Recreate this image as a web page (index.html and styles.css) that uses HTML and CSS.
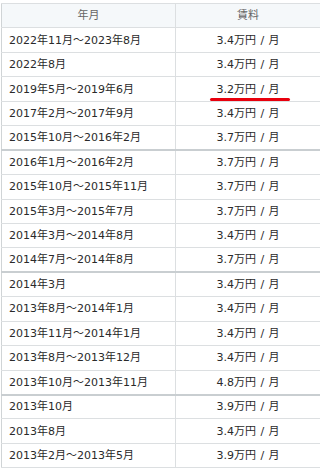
FILE: index.html
```html
<!DOCTYPE html>
<html lang="ja">
<head>
<meta charset="utf-8">
<link rel="stylesheet" href="styles.css">
</head>
<body>
<table class="rent">
  <thead>
    <tr><th class="c-date">年月</th><th class="c-rent">賃料</th></tr>
  </thead>
  <tbody>
    <tr><td>2022年11月～2023年8月</td><td class="r">3.4万円 / 月</td></tr>
    <tr><td>2022年8月</td><td class="r">3.4万円 / 月</td></tr>
    <tr><td>2019年5月～2019年6月</td><td class="r"><span class="mark">3.2万円 / 月</span></td></tr>
    <tr><td>2017年2月～2017年9月</td><td class="r">3.4万円 / 月</td></tr>
    <tr class="sep"><td>2015年10月～2016年2月</td><td class="r">3.7万円 / 月</td></tr>
    <tr><td>2016年1月～2016年2月</td><td class="r">3.7万円 / 月</td></tr>
    <tr><td>2015年10月～2015年11月</td><td class="r">3.7万円 / 月</td></tr>
    <tr><td>2015年3月～2015年7月</td><td class="r">3.7万円 / 月</td></tr>
    <tr><td>2014年3月～2014年8月</td><td class="r">3.4万円 / 月</td></tr>
    <tr class="sep"><td>2014年7月～2014年8月</td><td class="r">3.7万円 / 月</td></tr>
    <tr><td>2014年3月</td><td class="r">3.4万円 / 月</td></tr>
    <tr><td>2013年8月～2014年1月</td><td class="r">3.4万円 / 月</td></tr>
    <tr><td>2013年11月～2014年1月</td><td class="r">3.4万円 / 月</td></tr>
    <tr><td>2013年8月～2013年12月</td><td class="r">3.4万円 / 月</td></tr>
    <tr class="sep"><td>2013年10月～2013年11月</td><td class="r">4.8万円 / 月</td></tr>
    <tr><td>2013年10月</td><td class="r">3.9万円 / 月</td></tr>
    <tr><td>2013年8月</td><td class="r">3.4万円 / 月</td></tr>
    <tr><td>2013年2月～2013年5月</td><td class="r">3.9万円 / 月</td></tr>
  </tbody>
</table>
</body>
</html>
```
FILE: styles.css
```css
html, body {
  margin: 0;
  background: #fff;
}
body {
  padding: 3px 0 0 1px;
  font-family: "DejaVu Sans", Verdana, "Noto Sans CJK JP", sans-serif;
  font-size: 11px;
  color: #2a2a2a;
}
.rent {
  border-collapse: collapse;
  width: 320px;
  table-layout: fixed;
}
.rent th, .rent td {
  border: 1px solid #dcdfe1;
  padding: 0 7px;
  height: 24.44px;
  line-height: 15px;
  box-sizing: border-box;
  white-space: nowrap;
}
.rent th {
  background: #f5f8fa;
  font-weight: normal;
  color: #666;
  text-align: center;
}
.c-date { width: 174px; }
.rent td.r { text-align: center; }
.rent td.r { word-spacing: 1px; }
.rent tr.sep td { border-bottom: 2px solid #c9ced1; }
.rent td:first-child, .rent th:first-child { border-left-color: #d0d4d6; }
.mark {
  position: relative;
}
.mark::after {
  content: "";
  position: absolute;
  left: -6px;
  right: -10px;
  bottom: -5px;
  height: 3px;
  border-radius: 2px;
  background: #e8000d;
}
```
